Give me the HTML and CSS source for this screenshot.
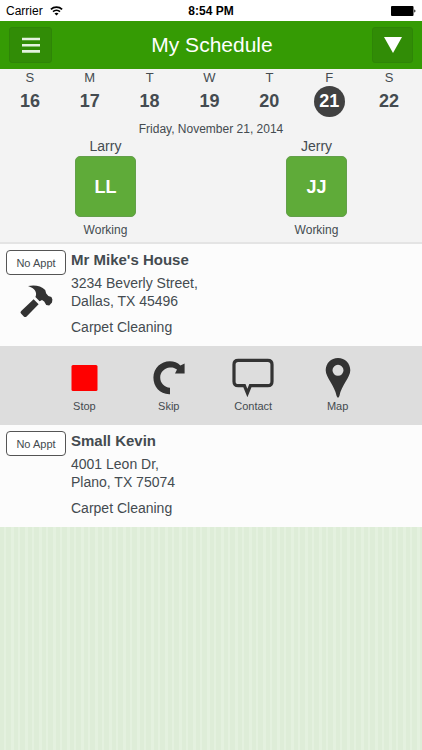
FILE: index.html
```html
<!DOCTYPE html>
<html lang="en">
  <head>
    <meta charset="UTF-8" />
    <meta name="viewport" content="width=device-width, initial-scale=1.0" />
    <title>My Schedule</title>
    <link rel="stylesheet" href="styles.css" />
  </head>
  <body>
    <div class="status-bar">
      <div class="status-bar__carrier">
        <span>Carrier</span>
        <svg class="status-bar__wifi" viewBox="0 0 13 10" width="13" height="10" aria-hidden="true">
          <path d="M0.9 3.4C4 .4 9 .4 12.1 3.4" fill="none" stroke="#000" stroke-width="1.7" />
          <path d="M3 5.7C5 3.8 8 3.8 10 5.7" fill="none" stroke="#000" stroke-width="1.6" />
          <path d="M4.5 7.4C5.6 6.4 7.4 6.4 8.5 7.4L6.5 9.4Z" />
        </svg>
      </div>
      <div class="status-bar__time">8:54 PM</div>
      <div class="status-bar__battery">
        <svg viewBox="0 0 25 10" width="25" height="10" aria-hidden="true">
          <rect width="22.5" height="10" rx="1" />
          <path d="M23.3 3.4a1.7 1.7 0 0 1 0 3.2z" />
        </svg>
      </div>
    </div>

    <header class="header">
      <button type="button" class="header__button" aria-label="Menu">
        <svg viewBox="0 0 18 16" width="18" height="16">
          <path d="M0 2h18M0 8.2h18M0 14.4h18" stroke="#e4f2df" stroke-width="2.6" />
        </svg>
      </button>
      <h1 class="header__title">My Schedule</h1>
      <button type="button" class="header__button header__button--filter" aria-label="Options">
        <svg viewBox="0 0 18 16" width="18" height="16">
          <path d="M0 0h18L9 16z" fill="#fff" />
        </svg>
      </button>
    </header>

    <main>
      <section class="calendar">
        <div class="week">
          <button type="button" class="day"><span class="day__name">S</span><span class="day__number">16</span></button>
          <button type="button" class="day"><span class="day__name">M</span><span class="day__number">17</span></button>
          <button type="button" class="day"><span class="day__name">T</span><span class="day__number">18</span></button>
          <button type="button" class="day"><span class="day__name">W</span><span class="day__number">19</span></button>
          <button type="button" class="day"><span class="day__name">T</span><span class="day__number">20</span></button>
          <button type="button" class="day day--active"><span class="day__name">F</span><span class="day__number">21</span></button>
          <button type="button" class="day"><span class="day__name">S</span><span class="day__number">22</span></button>
        </div>
        <p class="calendar__date">Friday, November 21, 2014</p>

        <div class="workers">
          <div class="worker">
            <div class="worker__name">Larry</div>
            <button type="button" class="worker__badge">LL</button>
            <div class="worker__status">Working</div>
          </div>
          <div class="worker">
            <div class="worker__name">Jerry</div>
            <button type="button" class="worker__badge">JJ</button>
            <div class="worker__status">Working</div>
          </div>
        </div>
      </section>

      <article class="job">
        <div class="job__side">
          <button type="button" class="job__appt">No Appt</button>
          <svg class="job__icon" viewBox="0 0 34 34" width="34" height="34" aria-hidden="true">
            <path d="M9 1C15.5 -.4 22 .6 26.2 5L27.2 8.6 29.4 11 32.4 12 33.4 14.4 33 17.4 30.2 20.4 27.2 20 25.2 16.6 23 15 20.6 16.2 16.4 12C18.6 7 15.4 3 9 1Z" />
            <path d="M14.6 14.2L19.6 19.2 7.6 31.4Q6.2 32.8 4.8 31.4L2 28.6Q.8 27.4 2.2 26Z" />
          </svg>
        </div>
        <div class="job__info">
          <h2 class="job__customer">Mr Mike's House</h2>
          <address class="job__address">3234 Beverly Street,<br />Dallas, TX 45496</address>
          <p class="job__service">Carpet Cleaning</p>
        </div>
      </article>

      <div class="actions">
        <button type="button" class="action">
          <svg class="action__icon" viewBox="0 0 42 42" width="42" height="42">
            <rect x="8.5" y="9" width="26" height="26" rx="1.5" fill="#f00" />
          </svg>
          <span>Stop</span>
        </button>
        <button type="button" class="action">
          <svg class="action__icon" viewBox="0 0 42 42" width="42" height="42">
            <path d="M22 38.2C12 38.6 5.4 31 5.4 21.6 5.4 12 13 5.2 21.8 5.2 26 5.2 29.6 6.6 32.4 9.4L36.6 7.6V17.6H27L29 13.6C26.8 12 24.4 11.4 22 11.6 16.4 12 12.2 16.2 12.2 21.6 12.2 27.2 16.4 31.4 22 31.8Z" />
          </svg>
          <span>Skip</span>
        </button>
        <button type="button" class="action">
          <svg class="action__icon" viewBox="0 0 42 42" width="42" height="42">
            <path d="M6.2 4.4H35.8Q40 4.4 40 8.6V25.4Q40 29.6 35.8 29.6H18.4L15.4 37 12.4 29.6H6.2Q2 29.6 2 25.4V8.6Q2 4.4 6.2 4.4Z" fill="none" stroke="#333" stroke-width="3.2" />
          </svg>
          <span>Contact</span>
        </button>
        <button type="button" class="action">
          <svg class="action__icon" viewBox="0 0 42 42" width="42" height="42">
            <path fill-rule="evenodd" d="M21 2C14 2 8.7 7.4 8.7 14.2 8.7 21.6 17.6 29 19.6 40Q21 43.4 22.4 40C24.4 29 33.3 21.6 33.3 14.2 33.3 7.4 28 2 21 2ZM21 8.8A5.5 5.5 0 1 1 21 19.8 5.5 5.5 0 1 1 21 8.8Z" />
          </svg>
          <span>Map</span>
        </button>
      </div>

      <article class="job">
        <div class="job__side">
          <button type="button" class="job__appt">No Appt</button>
        </div>
        <div class="job__info">
          <h2 class="job__customer">Small Kevin</h2>
          <address class="job__address">4001 Leon Dr,<br />Plano, TX 75074</address>
          <p class="job__service">Carpet Cleaning</p>
        </div>
      </article>
    </main>
  </body>
</html>
```
FILE: styles.css
```css
* {
  box-sizing: border-box;
}
body {
  margin: 0;
  min-height: 100vh;
  font-family: "Liberation Sans", Arial, Helvetica, sans-serif;
  font-size: 14px;
  line-height: 18px;
  color: #444b50;
  background-color: #deedd8;
  background-image: repeating-linear-gradient(
    to right,
    #deedd8 0,
    #deedd8 4px,
    #e4f1df 4px,
    #e4f1df 6px,
    #deedd8 6px,
    #deedd8 11px,
    #e4f1df 11px,
    #e4f1df 14px
  );
}
button {
  margin: 0;
  padding: 0;
  border: none;
  background: none;
  font: inherit;
  color: inherit;
  cursor: pointer;
}
h1,
h2,
p {
  margin: 0;
}
svg {
  display: block;
}

/* status bar */
.status-bar {
  display: grid;
  grid-template-columns: 1fr auto 1fr;
  align-items: center;
  height: 21px;
  padding: 0 6px;
  font-size: 12px;
  color: #000;
  background: #fff;
}
.status-bar__carrier {
  display: flex;
  align-items: center;
  gap: 7px;
}
.status-bar__time {
  font-weight: bold;
}
.status-bar__battery {
  justify-self: end;
}

/* header */
.header {
  display: flex;
  align-items: center;
  justify-content: space-between;
  height: 48px;
  padding: 0 9px;
  background: #359b04;
}
.header__button {
  display: flex;
  align-items: center;
  justify-content: center;
  width: 43px;
  height: 36px;
  border: 1px solid #2e8507;
  border-radius: 3px;
  background: #318c06;
}
.header__button--filter {
  width: 41px;
}
.header__title {
  font-size: 21px;
  font-weight: normal;
  line-height: 24px;
  color: #fff;
}

/* calendar */
.calendar {
  border-bottom: 2px solid #e4e4e4;
  background: #f3f3f3;
}
.week {
  display: grid;
  grid-template-columns: repeat(7, 1fr);
  padding-right: 3px;
}
.day {
  display: flex;
  flex-direction: column;
  align-items: center;
}
.day__name {
  font-size: 13px;
  line-height: 17px;
}
.day__number {
  width: 31px;
  height: 31px;
  border-radius: 50%;
  font-size: 18px;
  font-weight: bold;
  line-height: 31px;
}
.day--active .day__number {
  color: #fff;
  background: #414141;
}
.calendar__date {
  padding-top: 3px;
  font-size: 12px;
  text-align: center;
}
.workers {
  display: flex;
  padding-bottom: 3px;
}
.worker {
  flex: 1;
  display: flex;
  flex-direction: column;
  align-items: center;
}
.worker__name {
  padding-bottom: 2px;
  line-height: 16px;
}
.worker__badge {
  width: 61px;
  height: 61px;
  border: 1px solid #639f4a;
  border-radius: 5px;
  font-size: 18px;
  font-weight: bold;
  color: #fff;
  background: #5fab39;
}
.worker__status {
  padding-top: 4px;
  font-size: 12px;
}

/* jobs */
.job {
  display: flex;
  gap: 5px;
  padding: 6px 6px 10px;
  background: #fcfcfc;
}
.job__side {
  display: flex;
  flex-direction: column;
  align-items: center;
  gap: 10px;
  width: 60px;
}
.job__appt {
  width: 60px;
  height: 25px;
  border: 1px solid #555;
  border-radius: 4px;
  font-size: 11px;
  background: #fff;
}
.job__icon,
.action__icon {
  fill: #333;
}
.job__customer {
  font-size: 15px;
  line-height: 20px;
}
.job__address {
  padding-top: 4px;
  font-style: normal;
}
.job__service {
  padding-top: 8px;
}

/* job actions */
.actions {
  display: flex;
  justify-content: center;
  padding: 10px 0 11px;
  background: #ddd;
}
.action {
  display: flex;
  flex-direction: column;
  align-items: center;
  width: 20%;
  font-size: 11px;
  line-height: 16px;
}
```
